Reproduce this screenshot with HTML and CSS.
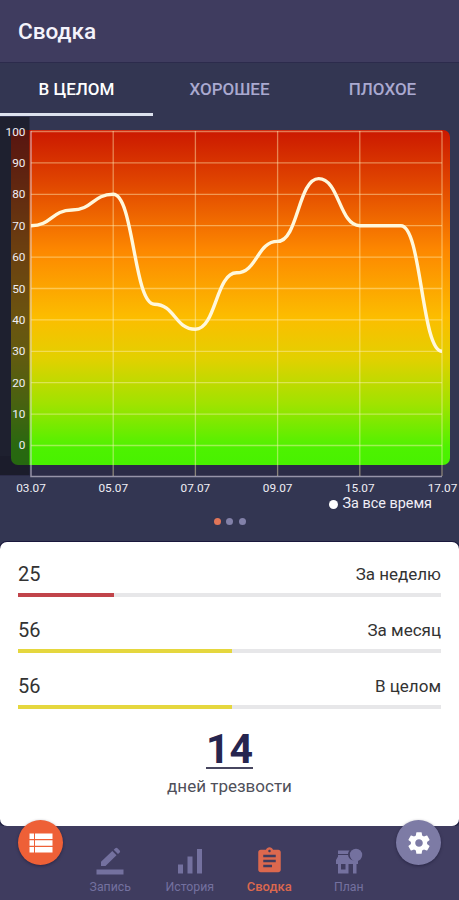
FILE: index.html
```
<!DOCTYPE html>
<html lang="ru">
<head>
  <meta charset="UTF-8">
  <meta name="viewport" content="width=device-width, initial-scale=1.0">
  <title>Сводка</title>
  <link rel="stylesheet" href="styles.css">
</head>
<body>
  <header class="header">
    <h1>Сводка</h1>
  </header>

  <nav class="tabs">
    <a class="tab active">В ЦЕЛОМ</a>
    <a class="tab">ХОРОШЕЕ</a>
    <a class="tab">ПЛОХОЕ</a>
  </nav>

  <section class="chart">
    <svg width="459" height="381" viewBox="0 0 459 381">
      <defs>
        <linearGradient id="heat" x1="0" y1="0" x2="0" y2="1">
          <stop offset="0" stop-color="#cb1800"/>
          <stop offset="0.15" stop-color="#df4300"/>
          <stop offset="0.36" stop-color="#fd8800"/>
          <stop offset="0.56" stop-color="#fcbd00"/>
          <stop offset="0.68" stop-color="#e3d000"/>
          <stop offset="0.82" stop-color="#9fe300"/>
          <stop offset="0.95" stop-color="#4df200"/>
          <stop offset="1" stop-color="#48f100"/>
        </linearGradient>
      </defs>
      <rect class="plot-shadow" x="0" y="340" width="443" height="20"/>
      <rect x="11" y="14" width="439" height="335" rx="7" fill="url(#heat)"/>
      <rect class="axis-shade" x="0" y="1" width="29.5" height="358"/>

      <path class="grid" d="M31 15.5H442M31 46.9H442M31 78.3H442M31 109.7H442M31 141.1H442M31 172.5H442M31 203.9H442M31 235.3H442M31 266.7H442M31 298.1H442M31 329.5H442"/>
      <path class="grid" d="M113.2 15V360M195.4 15V360M277.6 15V360M359.8 15V360M442 15V360"/>
      <path class="axis" d="M31 15V360.5H442"/>

      <path class="line" d="M31 109.7C51.6 109.7 51.6 94 72.1 94S92.7 78.3 113.2 78.3S133.8 188.2 154.3 188.2S174.9 213.3 195.4 213.3S216 156.8 236.5 156.8S257.1 125.4 277.6 125.4S298.2 62.6 318.7 62.6S339.3 109.7 359.8 109.7H400.9C421.5 109.7 421.5 235.3 442 235.3"/>

      <g class="y-labels">
        <text x="25.5" y="19.5">100</text>
        <text x="25.5" y="51">90</text>
        <text x="25.5" y="82">80</text>
        <text x="25.5" y="113.5">70</text>
        <text x="25.5" y="145">60</text>
        <text x="25.5" y="176.5">50</text>
        <text x="25.5" y="207.5">40</text>
        <text x="25.5" y="239">30</text>
        <text x="25.5" y="270.5">20</text>
        <text x="25.5" y="302">10</text>
        <text x="25.5" y="333">0</text>
      </g>
      <g class="x-labels">
        <text x="31" y="376">03.07</text>
        <text x="113.2" y="376">05.07</text>
        <text x="195.4" y="376">07.07</text>
        <text x="277.6" y="376">09.07</text>
        <text x="359.8" y="376">15.07</text>
        <text x="442.5" y="376">17.07</text>
      </g>
    </svg>
    <div class="legend"><span class="legend-dot"></span>За все время</div>
    <div class="pager">
      <span class="dot current"></span>
      <span class="dot"></span>
      <span class="dot"></span>
    </div>
  </section>

  <main class="card">
    <div class="stat">
      <div class="stat-row"><span class="value">25</span><span>За неделю</span></div>
      <div class="bar"><div class="fill red" style="width: 22.6%"></div></div>
    </div>
    <div class="stat">
      <div class="stat-row"><span class="value">56</span><span>За месяц</span></div>
      <div class="bar"><div class="fill yellow" style="width: 50.7%"></div></div>
    </div>
    <div class="stat">
      <div class="stat-row"><span class="value">56</span><span>В целом</span></div>
      <div class="bar"><div class="fill yellow" style="width: 50.7%"></div></div>
    </div>
    <div class="days">
      <div class="days-count">14</div>
      <div class="days-label">дней трезвости</div>
    </div>
  </main>

  <footer class="bottom">
    <button class="fab fab-list" aria-label="Список">
      <svg width="24" height="20" viewBox="0 0 24 20"><path d="M0.500 0.500H5V6H0.500zM6 0.500H23.500V6H6zM0.500 7.200H5V12.700H0.500zM6 7.200H23.500V12.700H6zM0.500 14H5V19.500H0.500zM6 14H23.500V19.500H6z"/></svg>
    </button>
    <nav class="menu">
      <a class="item">
        <svg width="30" height="30" viewBox="0 0 30 30"><path d="M1.500 22.500H28.500V27.500H1.500zM6 14.800L17.300 4L21.500 8.200L10.500 19H6zM18.700 2.700L20.300 1.200Q21.500 0.300 22.500 1.200L24.700 3.400Q25.600 4.500 24.700 5.400L23 7z"/></svg>
        <span>Запись</span>
      </a>
      <a class="item">
        <svg width="30" height="30" viewBox="0 0 30 30"><path d="M3 17.500H8V26.500H3zM12.500 9.500H17.500V26.500H12.500zM22 2H27V26.500H22z"/></svg>
        <span>История</span>
      </a>
      <a class="item active">
        <svg width="31" height="31" viewBox="0 0 24 24"><path d="M19 3h-4.180C14.400 1.840 13.300 1 12 1c-1.300 0-2.400.84-2.820 2H5c-1.100 0-2 .9-2 2v14c0 1.100.9 2 2 2h14c1.100 0 2-.9 2-2V5c0-1.100-.9-2-2-2zm-7 0c.55 0 1 .45 1 1s-.45 1-1 1-1-.45-1-1 .45-1 1-1zm2 14H7v-2h7v2zm3-4H7v-2h10v2zm0-4H7V7h10v2z"/></svg>
        <span>Сводка</span>
      </a>
      <a class="item">
        <svg width="30" height="30" viewBox="0 0 30 30"><path d="M4 3.500H15.500A6 6 0 0 0 19 13.300H24V17H22.500V26.500H19V17H14.500V26.500H4V17H2V13L4 9.500zM7 17V22.500H11.500V17z" fill-rule="evenodd"/><circle cx="22" cy="8" r="6.200"/><path class="cut" d="M3.500 7.500H15.500"/></svg>
        <span>План</span>
      </a>
    </nav>
    <button class="fab fab-settings" aria-label="Настройки">
      <svg width="26" height="26" viewBox="0 0 24 24"><path d="M19.430 12.980c.04-.32.07-.64.07-.98s-.03-.66-.07-.98l2.110-1.650c.19-.15.24-.42.12-.64l-2-3.460c-.12-.22-.39-.3-.61-.22l-2.490 1c-.52-.4-1.080-.73-1.690-.98l-.38-2.650C14.460 2.180 14.250 2 14 2h-4c-.25 0-.46.18-.49.42l-.38 2.650c-.61.25-1.170.59-1.690.98l-2.490-1c-.23-.09-.49 0-.61.22l-2 3.460c-.13.22-.07.49.12.64l2.110 1.650c-.04.32-.07.65-.07.98s.03.66.07.98l-2.110 1.650c-.19.15-.24.42-.12.64l2 3.460c.12.22.39.3.61.22l2.490-1c.52.4 1.080.73 1.690.98l.38 2.650c.03.24.24.42.49.42h4c.25 0 .46-.18.49-.42l.38-2.650c.61-.25 1.170-.59 1.690-.98l2.490 1c.23.09.49 0 .61-.22l2-3.460c.12-.22.07-.49-.12-.64l-2.110-1.650zM12 15.500c-1.930 0-3.500-1.570-3.500-3.500s1.570-3.500 3.500-3.500 3.500 1.570 3.500 3.500-1.570 3.500-3.500 3.500z"/></svg>
    </button>
  </footer>
</body>
</html>
```
FILE: styles.css
```
* {
  margin: 0;
  padding: 0;
  box-sizing: border-box;
}

body {
  width: 459px;
  height: 900px;
  overflow: hidden;
  display: flex;
  flex-direction: column;
  background: #333652;
  color: #333;
  font-family: Roboto, "Noto Sans", sans-serif;
}

.header {
  height: 63px;
  padding: 18px 18px 0;
  background: #3f3c5f;
  border-bottom: 1px solid #2c2b4c;
}

.header h1 {
  font-size: 22.6px;
  line-height: 28px;
  font-weight: 500;
  color: #f4f3fb;
}

.tabs {
  height: 53px;
  display: grid;
  grid-template-columns: repeat(3, 1fr);
}

.tab {
  padding-top: 1px;
  display: flex;
  align-items: center;
  justify-content: center;
  font-size: 17px;
  font-weight: 500;
  color: #aaa9d0;
  border-bottom: 3px solid transparent;
}

.tab.active {
  color: #fff;
  border-bottom-color: #dde2ee;
}

/* chart */
.chart {
  height: 426px;
}

.chart svg {
  display: block;
}

.plot-shadow {
  fill: #2b2b47;
}

.axis-shade {
  fill: #11141a;
  fill-opacity: 0.62;
}

.grid {
  fill: none;
  stroke: #fff2b8;
  stroke-opacity: 0.45;
  stroke-width: 1.3;
}

.axis {
  fill: none;
  stroke: #d9d4e4;
  stroke-opacity: 0.6;
  stroke-width: 1.5;
}

.line {
  fill: none;
  stroke: #fff8dc;
  stroke-width: 3.4;
}

.y-labels,
.x-labels {
  font-size: 11.8px;
  font-weight: 400;
  fill: #f0eef5;
}

.y-labels {
  text-anchor: end;
}

.x-labels {
  text-anchor: middle;
}

.legend {
  height: 14px;
  margin-right: 27px;
  display: flex;
  align-items: center;
  justify-content: flex-end;
  gap: 5px;
  font-size: 14.4px;
  line-height: 14px;
  color: #f0eff7;
}

.legend-dot {
  width: 9px;
  height: 9px;
  border-radius: 50%;
  background: #fff;
}

.pager {
  margin-top: 7px;
  display: flex;
  justify-content: center;
  gap: 5.5px;
}

.dot {
  width: 7px;
  height: 7px;
  border-radius: 50%;
  background: #8281a9;
}

.dot.current {
  background: #e17558;
}

/* summary */
.card {
  height: 284px;
  padding: 20px 18px 0;
  background: #fff;
  border-radius: 7px;
  box-shadow: 0 0 0 1px #19173c;
}

.stat {
  height: 56px;
}

.stat-row {
  height: 31px;
  display: flex;
  justify-content: space-between;
  font-size: 17px;
  line-height: 24px;
}

.stat-row .value {
  font-size: 20px;
}

.bar {
  height: 4px;
  background: #e7e7e9;
}

.fill {
  height: 4px;
}

.red {
  background: #c1444a;
}

.yellow {
  background: #e5d73e;
}

.days {
  padding-top: 1px;
  display: flex;
  flex-direction: column;
  align-items: center;
}

.days-count {
  height: 38px;
  font-size: 41px;
  line-height: 36px;
  font-weight: 700;
  color: #26254f;
  border-bottom: 2px solid #47465f;
}

.days-label {
  margin-top: 5px;
  font-size: 17px;
  line-height: 24px;
  color: #50505a;
}

/* bottom menu */
.bottom {
  height: 74px;
  padding: 1px 18px 0;
  display: flex;
  justify-content: space-between;
  background: #3f3c5f;
}

.fab {
  width: 45px;
  height: 45px;
  margin-top: -7px;
  display: flex;
  align-items: center;
  justify-content: center;
  border: none;
  border-radius: 50%;
  box-shadow: 0 1px 3px rgba(20, 18, 45, 0.5);
  position: relative;
}

.fab svg {
  fill: #fff;
}

.fab-list {
  background: #ee6037;
}

.fab-settings {
  background: #7d7ba5;
}

.menu {
  width: 318px;
  display: grid;
  grid-template-columns: repeat(4, 1fr);
}

.item {
  padding-top: 20px;
  display: flex;
  flex-direction: column;
  align-items: center;
  font-size: 12.3px;
  line-height: 14px;
  color: #74719f;
}

.item svg {
  height: 30px;
  margin-bottom: 3px;
  fill: currentColor;
}

.item.active {
  color: #dc684e;
  font-size: 13px;
  font-weight: 500;
}

.item.active svg {
  margin-top: -1px;
  margin-bottom: 4px;
}

.cut {
  stroke: #3f3c5f;
  stroke-width: 1;
}
```
